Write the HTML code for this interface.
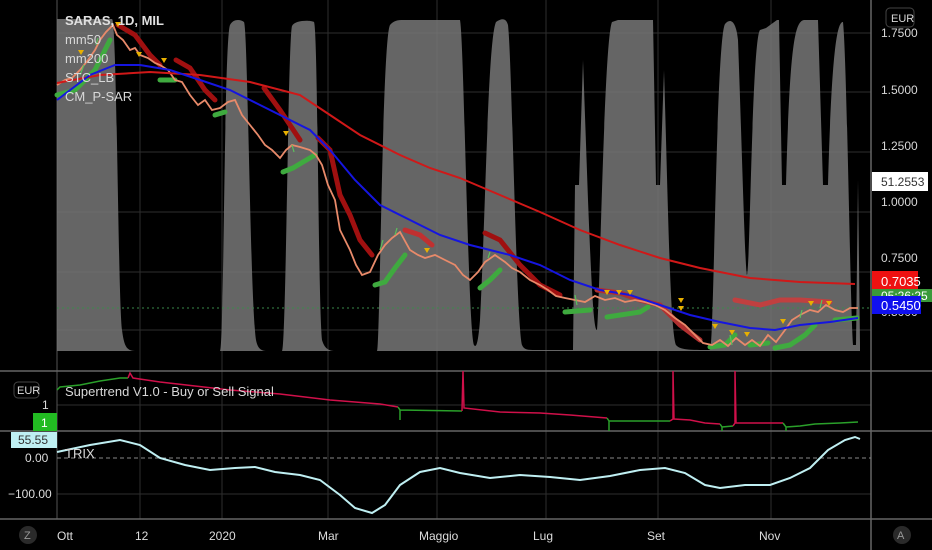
<!DOCTYPE html>
<html><head><meta charset="utf-8"><style>
html,body{margin:0;padding:0;background:#000;width:932px;height:550px;overflow:hidden}
svg{display:block}
text{font-family:"Liberation Sans",sans-serif}
</style></head><body>
<svg width="932" height="550" viewBox="0 0 932 550" xmlns="http://www.w3.org/2000/svg">
<rect width="932" height="550" fill="#000"/>
<g stroke="#2e2e2e" stroke-width="1">
<line x1="57" y1="33" x2="871" y2="33"/><line x1="57" y1="92" x2="871" y2="92"/>
<line x1="57" y1="152" x2="871" y2="152"/><line x1="57" y1="212" x2="871" y2="212"/>
<line x1="57" y1="272" x2="871" y2="272"/><line x1="57" y1="330" x2="871" y2="330"/>
<line x1="57" y1="405" x2="871" y2="405"/><line x1="57" y1="494" x2="871" y2="494"/>
<line x1="140" y1="0" x2="140" y2="519"/><line x1="222" y1="0" x2="222" y2="519"/>
<line x1="328" y1="0" x2="328" y2="519"/><line x1="437" y1="0" x2="437" y2="519"/>
<line x1="546" y1="0" x2="546" y2="519"/><line x1="658" y1="0" x2="658" y2="519"/>
<line x1="771" y1="0" x2="771" y2="519"/>
</g>
<line x1="57" y1="0" x2="57" y2="519" stroke="#555"/>
<line x1="0" y1="371" x2="932" y2="371" stroke="#666" stroke-width="1.5"/>
<line x1="0" y1="431" x2="932" y2="431" stroke="#666" stroke-width="1.5"/>
<line x1="0" y1="519" x2="932" y2="519" stroke="#666" stroke-width="1.5"/>
<line x1="871" y1="0" x2="871" y2="550" stroke="#666" stroke-width="1.5"/>
<!-- STC grey area -->
<path fill="#777" fill-opacity="0.85" d="M57,351 L57,19 L112,19 C117,19 118,300 122,330 C124,345 126,351 135,351 L220,351
C224,351 224,40 230,25 C233,19 240,19 244,22 C248,30 250,300 256,340 C258,350 262,351 268,351 L282,351
C286,351 288,40 292,26 C295,20 310,20 314,22 C318,30 318,300 322,340 C325,350 330,351 336,351 L377,351
C380,351 382,40 390,25 C395,19 400,20 410,20 L460,20 C464,40 468,330 474,345 C476,348 478,345 480,320 C486,200 488,40 496,22 C502,18 506,18 508,25 C512,60 516,320 522,345 C524,350 528,350 535,350 L573,350
L575,185 L579,185 L583,60 L588,200 C592,300 594,330 597,330 C600,300 604,40 612,22 L618,20 L653,20 L656,185 L660,185 L664,70 C668,200 670,330 676,345 C680,350 690,350 710,350
C714,350 716,40 725,24 C730,18 736,20 738,40 C742,150 745,270 747,275 C750,270 752,40 760,30 L766,28 L777,20 L779,20 L782,185 L786,185 C790,40 795,20 805,20 L818,20 L823,185 L828,185 C832,40 838,22 843,22 C847,60 850,300 853,345 L856,345 L858,180 L860,345 L860,351 Z"/>
<line x1="57" y1="308" x2="871" y2="308" stroke="#3a8a4a" stroke-dasharray="2,3"/>
<g fill="none" stroke-width="5" stroke-linecap="round">
<path stroke="#a01010" d="M118,25 L135,35 L150,55 L160,65"/>
<path stroke="#a01010" d="M176,60 L190,68 L205,90 L215,100"/>
<path stroke="#a01010" d="M264,88 L280,110 L300,140"/>
<path stroke="#a01010" d="M318,138 L330,150 L340,195 L350,215 L360,240 L372,255"/>
<path stroke="#c03030" d="M405,230 L420,235 L432,245"/>
<path stroke="#a01010" d="M485,233 L500,240 L520,265 L540,285 L560,295"/>
<path stroke="#b03030" d="M597,290 L620,293 L640,300 L660,305 L680,325 L700,340"/>
<path stroke="#c04040" d="M735,300 L760,305 L780,300 L800,300 L830,302"/>
<path stroke="#3faa3f" d="M57,95 L75,90 L95,70 L110,40"/>
<path stroke="#3faa3f" d="M160,80 L175,80"/>
<path stroke="#3faa3f" d="M215,115 L225,112"/>
<path stroke="#3faa3f" d="M283,172 L293,168 L303,162 L315,155"/>
<path stroke="#3faa3f" d="M375,285 L385,282 L395,268 L405,255"/>
<path stroke="#3faa3f" d="M480,288 L490,280 L500,270"/>
<path stroke="#3faa3f" d="M565,312 L590,310"/>
<path stroke="#3faa3f" d="M607,317 L640,312 L648,307"/>
<path stroke="#3faa3f" d="M710,347 L725,345 L735,335 M750,345 L768,343 M775,348 L790,345 L805,335 L815,325 M835,320 L857,318"/>
</g>
<path fill="none" stroke="#e88a6a" stroke-width="1.8" d="M57,85 L65,80 L72,78 L80,70 L88,60 L95,50 L100,40 L106,32 L113,25 L117,35 L123,40 L130,50 L135,48 L140,55 L148,58 L155,63 L160,65 L168,70 L175,80 L182,82 L190,95 L198,105 L205,100 L212,110 L220,108 L228,102 L235,100 L242,115 L250,125 L258,135 L265,145 L272,150 L280,158 L286,150 L292,145 L300,147 L310,150 L316,155 L322,165 L328,185 L335,200 L340,230 L345,240 L350,250 L356,265 L362,275 L370,272 L378,255 L385,245 L392,238 L400,232 L410,250 L418,255 L425,258 L435,255 L445,260 L455,265 L463,275 L470,280 L478,272 L485,262 L495,255 L505,262 L512,268 L520,272 L530,280 L540,285 L548,290 L556,296 L565,298 L575,300 L585,302 L595,296 L605,300 L615,298 L625,302 L635,300 L645,302 L655,305 L665,310 L675,318 L685,325 L695,335 L703,343 L712,345 L720,340 L728,346 L736,338 L745,345 L752,340 L760,346 L768,335 L776,342 L785,330 L792,320 L800,315 L810,310 L818,312 L826,305 L835,310 L843,312 L850,308 L858,308"/>
<path fill="none" stroke="#5cc05c" stroke-width="1.2" d="M80,75 L84,65 M96,45 L98,38 M292,145 L294,152 M380,250 L383,240 M395,235 L397,228 M488,258 L490,252 M575,295 L577,305 M730,335 L732,345 M800,318 L802,310 M820,308 L822,300"/>
<path fill="none" stroke="#d01818" stroke-width="2" d="M57,83 L100,75 L150,72 L200,75 L250,82 L300,95 L330,115 L360,135 L400,155 L430,168 L460,178 L500,195 L540,212 L580,230 L620,245 L660,258 L700,268 L750,278 L800,282 L855,284"/>
<path fill="none" stroke="#1515e0" stroke-width="2" d="M57,100 L90,75 L115,65 L140,65 L170,70 L200,80 L230,90 L260,105 L290,120 L310,130 L330,150 L355,180 L380,205 L410,220 L440,235 L470,245 L490,250 L510,255 L540,265 L570,280 L600,290 L630,295 L660,305 L690,315 L720,322 L750,328 L775,330 L800,325 L830,322 L858,318"/>
<g fill="#e8b000">
<path d="M115,22 h6 l-3,5z"/><path d="M78,50 h6 l-3,5z"/><path d="M136,52 h6 l-3,5z"/><path d="M161,58 h6 l-3,5z"/>
<path d="M283,131 h6 l-3,5z"/><path d="M424,248 h6 l-3,5z"/><path d="M604,290 h6 l-3,5z"/><path d="M616,290 h6 l-3,5z"/><path d="M627,290 h6 l-3,5z"/>
<path d="M678,298 h6 l-3,5z"/><path d="M678,306 h6 l-3,5z"/><path d="M712,324 h6 l-3,5z"/><path d="M729,330 h6 l-3,5z"/><path d="M744,332 h6 l-3,5z"/><path d="M780,319 h6 l-3,5z"/><path d="M808,301 h6 l-3,5z"/><path d="M826,301 h6 l-3,5z"/>
</g>
<g fill="#d8d8d8" font-size="13">
<text x="65" y="25" font-weight="bold" fill="#e0e0e0">SARAS, 1D, MIL</text>
<text x="65" y="44">mm50</text><text x="65" y="63">mm200</text>
<text x="65" y="82">STC_LB</text><text x="65" y="101">CM_P-SAR</text>
</g>
<g fill="#d8d8d8" font-size="12">
<rect x="886" y="8" width="28" height="19" rx="4" fill="none" stroke="#444"/>
<text x="891" y="22" font-size="11">EUR</text>
<text x="881" y="37">1.7500</text><text x="881" y="94">1.5000</text>
<text x="881" y="150">1.2500</text><text x="881" y="206">1.0000</text>
<text x="881" y="262">0.7500</text><text x="881" y="316">0.5000</text>
</g>
<rect x="872" y="172" width="56" height="19" fill="#fff"/>
<text x="881" y="186" font-size="12" fill="#333">51.2553</text>
<rect x="872" y="267" width="30" height="2" fill="#000"/>
<rect x="872" y="268" width="30" height="2" fill="#000"/>
<rect x="872" y="271" width="46" height="21" fill="#ee1111"/>
<text x="881" y="286" font-size="13" fill="#fff">0.7035</text>
<rect x="872" y="289" width="60" height="13" fill="#3a9a3a"/>
<text x="881" y="300" font-size="12" fill="#fff">05:26:25</text>
<rect x="872" y="296" width="49" height="18" fill="#1010ee"/>
<text x="881" y="310" font-size="13" fill="#fff">0.5450</text>
<circle cx="902" cy="535" r="9" fill="#2a2a2a"/><text x="897" y="539" font-size="11" fill="#999">A</text>
<path fill="none" stroke="#2aa02a" stroke-width="1.5" d="M57,390 L60,387 L80,385 L100,381 L120,378 L128,378"/>
<path fill="none" stroke="#d0104a" stroke-width="1.5" d="M128,378 L130,373 L133,378 L160,382 L195,386 L230,390 L280,394 L330,400 L380,404 L398,407"/>
<path fill="none" stroke="#2aa02a" stroke-width="1.5" d="M398,407 L400,410 L400,420 M400,410 L462,411"/>
<path fill="none" stroke="#d0104a" stroke-width="1.5" d="M462,411 L463,371 L464,408 L500,412 L540,413 L570,415 L607,418"/>
<path fill="none" stroke="#2aa02a" stroke-width="1.5" d="M607,418 L609,421 L609,431 M609,421 L670,421"/>
<path fill="none" stroke="#d0104a" stroke-width="1.5" d="M670,421 L673,419 L673,371 L674,419 L690,420 L705,423 L720,424"/>
<path fill="none" stroke="#2aa02a" stroke-width="1.5" d="M720,424 L722,427 L722,431 M722,427 L733,426"/>
<path fill="none" stroke="#d0104a" stroke-width="1.5" d="M733,426 L735,423 L735,371 L736,423 L783,423"/>
<path fill="none" stroke="#2aa02a" stroke-width="1.5" d="M783,423 L786,427 L786,431 M786,427 L800,426 L815,424 L840,423 L858,422"/>
<text x="65" y="396" font-size="13" fill="#d8d8d8">Supertrend V1.0 - Buy or Sell Signal</text>
<rect x="14" y="382" width="25" height="16" rx="4" fill="none" stroke="#444"/>
<text x="17" y="394" font-size="11" fill="#ddd">EUR</text>
<text x="42" y="409" font-size="12" fill="#ddd">1</text>
<rect x="33" y="413" width="24" height="18" fill="#22bb22"/>
<text x="41" y="427" font-size="12" fill="#fff">1</text>
<line x1="57" y1="458" x2="871" y2="458" stroke="#888" stroke-dasharray="4,3"/>
<path fill="none" stroke="#bfeff2" stroke-width="2" d="M57,452 L90,445 L120,440 L140,445 L160,458 L185,465 L210,470 L235,468 L255,467 L275,472 L300,475 L320,480 L340,495 L355,508 L372,513 L385,505 L400,485 L420,472 L440,468 L460,473 L490,478 L520,475 L550,477 L580,480 L610,476 L640,470 L665,468 L685,473 L705,485 L720,488 L745,485 L770,485 L790,478 L810,468 L828,450 L845,440 L855,437 L860,439"/>
<text x="65" y="458" font-size="13" fill="#d8d8d8">TRIX</text>
<rect x="11" y="432" width="46" height="16" fill="#bfeff2"/>
<text x="18" y="444" font-size="12" fill="#333">55.55</text>
<text x="25" y="462" font-size="12" fill="#ddd">0.00</text>
<text x="8" y="498" font-size="12" fill="#ddd">−100.00</text>
<circle cx="28" cy="535" r="9" fill="#2a2a2a"/><text x="24" y="539" font-size="11" fill="#999">Z</text>
<g font-size="12" fill="#ddd">
<text x="57" y="540">Ott</text><text x="135" y="540">12</text><text x="209" y="540">2020</text>
<text x="318" y="540">Mar</text><text x="419" y="540">Maggio</text><text x="533" y="540">Lug</text>
<text x="647" y="540">Set</text><text x="759" y="540">Nov</text>
</g>
</svg>
</body></html>
